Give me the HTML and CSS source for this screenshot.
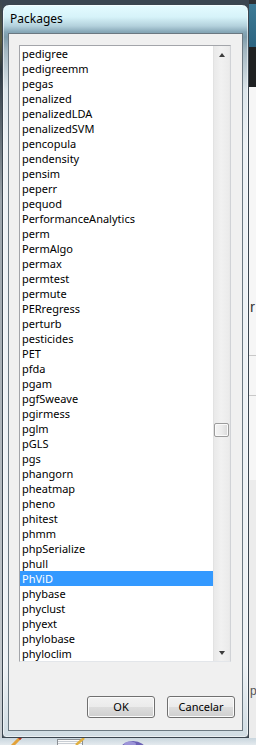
FILE: index.html
```html
<!DOCTYPE html>
<html>
<head>
<meta charset="utf-8">
<title>Packages</title>
<link rel="stylesheet" href="styles.css">
</head>
<body>
<div class="desktop">
  <span class="bg-text bg-r">r</span>
  <span class="bg-text bg-p">p</span>
  <div class="window">
    <div class="titlebar">Packages</div>
    <div class="client">
      <div class="listbox">
        <ul class="items">
          <li>pedigree</li>
          <li>pedigreemm</li>
          <li>pegas</li>
          <li>penalized</li>
          <li>penalizedLDA</li>
          <li>penalizedSVM</li>
          <li>pencopula</li>
          <li>pendensity</li>
          <li>pensim</li>
          <li>peperr</li>
          <li>pequod</li>
          <li>PerformanceAnalytics</li>
          <li>perm</li>
          <li>PermAlgo</li>
          <li>permax</li>
          <li>permtest</li>
          <li>permute</li>
          <li>PERregress</li>
          <li>perturb</li>
          <li>pesticides</li>
          <li>PET</li>
          <li>pfda</li>
          <li>pgam</li>
          <li>pgfSweave</li>
          <li>pgirmess</li>
          <li>pglm</li>
          <li>pGLS</li>
          <li>pgs</li>
          <li>phangorn</li>
          <li>pheatmap</li>
          <li>pheno</li>
          <li>phitest</li>
          <li>phmm</li>
          <li>phpSerialize</li>
          <li>phull</li>
          <li class="selected">PhViD</li>
          <li>phybase</li>
          <li>phyclust</li>
          <li>phyext</li>
          <li>phylobase</li>
          <li>phyloclim</li>
        </ul>
        <div class="scrollbar">
          <div class="sb-btn"><span class="arrow-up"></span></div>
          <div class="sb-track"><div class="sb-thumb"></div></div>
          <div class="sb-btn"><span class="arrow-down"></span></div>
        </div>
      </div>
      <div class="buttons">
        <button class="btn">OK</button>
        <button class="btn">Cancelar</button>
      </div>
    </div>
  </div>
  <div class="taskbar">
    <svg width="256" height="7" viewBox="0 0 256 7">
      <line x1="12" y1="8" x2="20" y2="0" stroke="#e2a23a" stroke-width="3"/>
      <line x1="19" y1="1" x2="21" y2="-1" stroke="#b0302a" stroke-width="3"/>
      <rect x="57.5" y="1.5" width="25" height="6" fill="#fbfbfb" stroke="#8a8f94"/>
      <line x1="58" y1="3.5" x2="82" y2="3.5" stroke="#c9ced4"/>
      <line x1="58" y1="5.5" x2="82" y2="5.5" stroke="#c9ced4"/>
      <line x1="76" y1="7" x2="84" y2="0" stroke="#e0b040" stroke-width="2.5"/>
      <ellipse cx="133" cy="12" rx="13" ry="9" fill="#6c62b6"/>
      <ellipse cx="130" cy="6" rx="6" ry="2.5" fill="#9c94d8"/>
    </svg>
  </div>
</div>
</body>
</html>
```
FILE: styles.css
```css
html, body {
  margin: 0;
  padding: 0;
}

body {
  width: 256px;
  height: 745px;
  overflow: hidden;
  font-family: "Noto Sans", "Liberation Sans", sans-serif;
}

.desktop {
  position: relative;
  width: 256px;
  height: 745px;
  overflow: hidden;
  background:
    linear-gradient(to bottom, transparent 0, transparent 355px, #c8c8c8 355px, #c8c8c8 356px, transparent 356px, transparent 395px, #c8c8c8 395px, #c8c8c8 396px, transparent 396px) right top / 7px 738px no-repeat,
    linear-gradient(to bottom, #2e3236 0, #2e3236 4px, #3d7b97 4px, #2c6480 47px, #1f2122 47px, #1f2122 87px, #f6f6f6 87px, #f6f6f6 480px, #ececec 480px) right top / 7px 738px no-repeat,
    linear-gradient(to bottom, #3a4651 0, #5b5a3c 40px, #2d3942 70px, #9ba4ab 200px, #c9ced2 738px) left top / 2px 738px no-repeat,
    #3a4651;
}

.bg-text {
  position: absolute;
  font-family: "Liberation Sans", sans-serif;
  color: #3a3a3a;
}

.bg-r {
  left: 250px;
  top: 298px;
  font-size: 15px;
}

.bg-p {
  left: 250px;
  top: 684px;
  font-size: 12px;
  color: #555;
}

.window {
  position: relative;
  margin: 4px 0 0 2px;
  width: 247px;
  height: 734px;
  box-sizing: border-box;
  border: 1px solid #3b4650;
  border-radius: 7px 7px 4px 4px;
  padding: 0 5px 6px 5px;
  display: flex;
  flex-direction: column;
  background:
    linear-gradient(to bottom, #e4fbff 0, #d6f3f9 12px, #b3d1dc 21px, #86a7b7 27px, #7e9cab 32px, #a3b7c1 45px, #dde6eb 85px, #eef2f5 140px, #eef2f5 660px, #d0dce3 100%);
  box-shadow: inset 0 0 0 1px rgba(255, 255, 255, 0.55);
}

.titlebar {
  height: 28px;
  box-sizing: border-box;
  padding: 6px 0 0 2px;
  font-size: 12px;
  line-height: 16px;
  color: #000;
}

.client {
  flex: 1;
  border: 1px solid #6b7881;
  background: #f0f0f0;
  display: flex;
  flex-direction: column;
}

.listbox {
  margin: 11px 0 0 10px;
  width: 212px;
  height: 617px;
  box-sizing: border-box;
  border: 1px solid;
  border-color: #a3a5aa #d0d2d6 #e3e6ea #a3a5aa;
  background: #fff;
  display: flex;
}

.items {
  list-style: none;
  margin: 0;
  padding: 0;
  width: 193px;
}

.items li {
  height: 15px;
  line-height: 15px;
  padding-left: 2px;
  font-size: 11px;
  color: #000;
  white-space: nowrap;
}

.items li.selected {
  background: #3399ff;
  color: #fff;
}

.scrollbar {
  width: 17px;
  display: flex;
  flex-direction: column;
  background: linear-gradient(to right, #dcdcdc 0, #e9e9e9 1px, #f1f1f1 8px, #ebebeb 16px, #e6e6e6 17px);
}

.sb-btn {
  height: 17px;
  display: flex;
  align-items: center;
  justify-content: center;
}

.arrow-up {
  width: 0;
  height: 0;
  border-left: 3.5px solid transparent;
  border-right: 3.5px solid transparent;
  border-bottom: 4px solid #3c3c3c;
}

.arrow-down {
  width: 0;
  height: 0;
  border-left: 3.5px solid transparent;
  border-right: 3.5px solid transparent;
  border-top: 4px solid #3c3c3c;
}

.sb-track {
  flex: 1;
}

.sb-thumb {
  margin: 360px 0 0 1px;
  width: 15px;
  height: 14px;
  box-sizing: border-box;
  border: 1px solid #9b9b9b;
  border-radius: 2px;
  background: linear-gradient(to right, #f4f4f4 0, #ececec 50%, #d9d9d9 100%);
  box-shadow: inset 0 0 0 1px #fafafa;
}

.buttons {
  margin-top: 34px;
  padding-right: 7px;
  display: flex;
  justify-content: flex-end;
  gap: 12px;
}

.btn {
  width: 68px;
  height: 22px;
  box-sizing: border-box;
  padding: 0;
  border: 1px solid #707070;
  border-radius: 3px;
  background: linear-gradient(to bottom, #f2f2f2 0, #ebebeb 50%, #dddddd 51%, #cfcfcf 100%);
  box-shadow: inset 0 0 0 1px #fbfbfb;
  font-family: "Noto Sans", "Liberation Sans", sans-serif;
  font-size: 11px;
  line-height: 18px;
  color: #000;
}

.taskbar {
  height: 7px;
  background: linear-gradient(to bottom, #c9d6de, #e4eaee);
}

.taskbar svg {
  display: block;
}
```
